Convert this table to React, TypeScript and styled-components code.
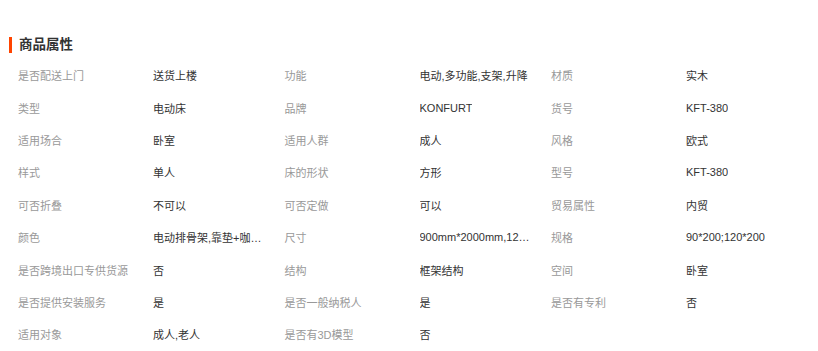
import styled, { createGlobalStyle } from 'styled-components';

const GlobalStyle = createGlobalStyle`
  html, body {
    margin: 0;
    padding: 0;
    background: #ffffff;
    font-family: "Liberation Sans", "Noto Sans CJK SC", sans-serif;
  }
`;

const attrs: [string, string][] = [
  ['是否配送上门', '送货上楼'],
  ['功能', '电动,多功能,支架,升降'],
  ['材质', '实木'],
  ['类型', '电动床'],
  ['品牌', 'KONFURT'],
  ['货号', 'KFT-380'],
  ['适用场合', '卧室'],
  ['适用人群', '成人'],
  ['风格', '欧式'],
  ['样式', '单人'],
  ['床的形状', '方形'],
  ['型号', 'KFT-380'],
  ['可否折叠', '不可以'],
  ['可否定做', '可以'],
  ['贸易属性', '内贸'],
  ['颜色', '电动排骨架,靠垫+咖啡色床头,乳胶床垫'],
  ['尺寸', '900mm*2000mm,1200mm*2000mm'],
  ['规格', '90*200;120*200'],
  ['是否跨境出口专供货源', '否'],
  ['结构', '框架结构'],
  ['空间', '卧室'],
  ['是否提供安装服务', '是'],
  ['是否一般纳税人', '是'],
  ['是否有专利', '否'],
  ['适用对象', '成人,老人'],
  ['是否有3D模型', '否'],
];

const App = () => {
  return (
    <>
      <GlobalStyle />
      <Section>
        <Title>商品属性</Title>
        <AttrGrid>
          {attrs.map(([label, value]) => (
            <AttrItem key={label}>
              <Label>{label}</Label>
              <Value title={value}>{value}</Value>
            </AttrItem>
          ))}
        </AttrGrid>
      </Section>
    </>
  );
};

export default App;

const Section = styled.div`
  padding: 37px 0 0 9px;
  width: 809px;
`;

const Title = styled.h3`
  margin: 0;
  height: 16px;
  line-height: 16px;
  padding-left: 7px;
  border-left: 3px solid #ff4400;
  font-size: 13.5px;
  font-weight: bold;
  color: #333333;
`;

const AttrGrid = styled.div`
  display: grid;
  grid-template-columns: repeat(3, 266.5px);
  grid-auto-rows: 32.4px;
  padding: 6px 0 0 9px;
`;

const AttrItem = styled.div`
  display: flex;
  align-items: center;
  font-size: 11px;
`;

const Label = styled.span`
  width: 135px;
  flex-shrink: 0;
  color: #999999;
  white-space: nowrap;
`;

const Value = styled.span`
  max-width: 112px;
  color: #333333;
  white-space: nowrap;
  overflow: hidden;
  text-overflow: ellipsis;
`;
